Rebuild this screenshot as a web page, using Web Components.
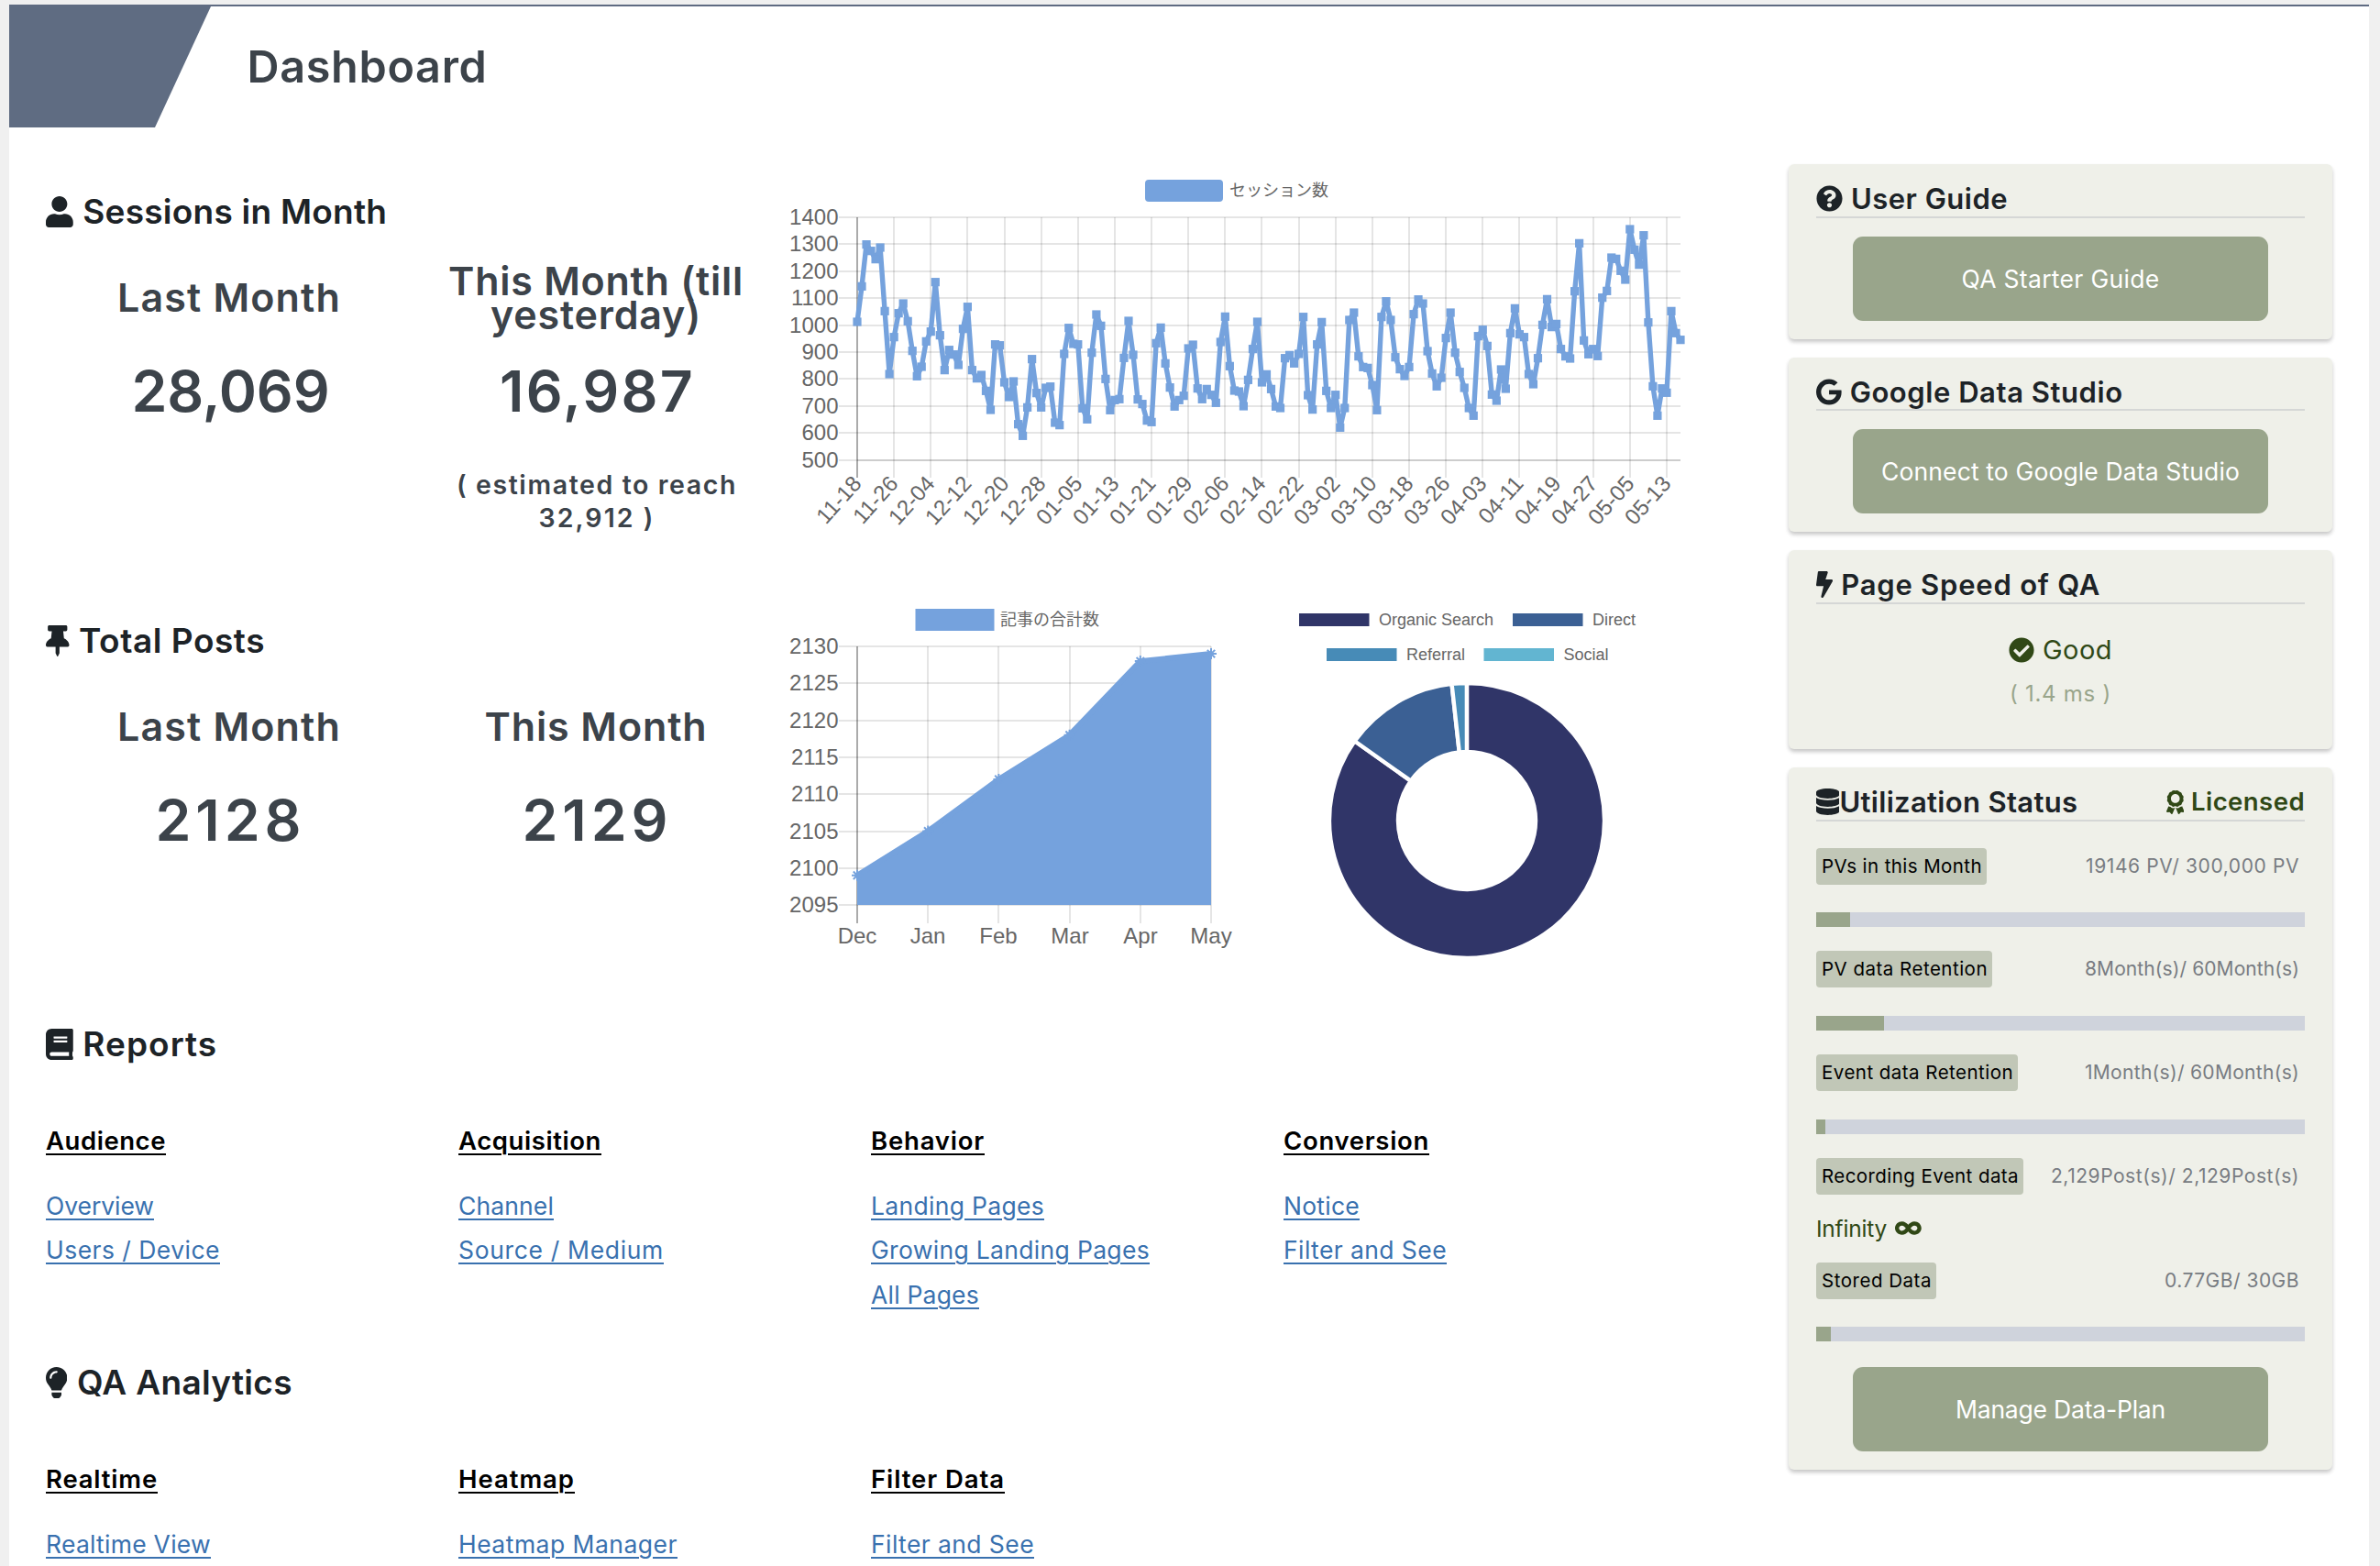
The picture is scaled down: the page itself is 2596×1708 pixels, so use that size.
<!DOCTYPE html>
<html lang="en">
<head>
<meta charset="utf-8">
<title>Dashboard</title>
<style>
    body {
        margin: 0;
        height: 1708px;
        overflow: hidden;
        background: #f0f0f0;
        color: #1d2327;
        font-family: Inter, "Noto Sans CJK JP", sans-serif;
        font-optical-sizing: none;
    }
</style>
</head>
<body>
<qa-dashboard>
    <qa-header slot="header"><fit-text w="262">Dashboard</fit-text></qa-header>

    <qa-section style="height: 460px">
        <qa-heading icon="user" w="332">Sessions in Month</qa-heading>
        <qa-stats>
            <qa-stat>
                <fit-text slot="label" w="244">Last Month</fit-text>
                <fit-text slot="value" w="216">28,069</fit-text>
            </qa-stat>
            <qa-stat>
                <fit-text slot="label" w="322">This Month (till</fit-text>
                <fit-text slot="label" w="230">yesterday)</fit-text>
                <fit-text slot="value" w="213">16,987</fit-text>
                <fit-text slot="note" w="306">( estimated to reach</fit-text>
                <fit-text slot="note" w="127">32,912 )</fit-text>
            </qa-stat>
        </qa-stats>
        <sessions-chart slot="chart"></sessions-chart>
    </qa-section>

    <qa-section style="height: 448px; --top: 35px">
        <qa-heading icon="pin" w="203">Total Posts</qa-heading>
        <qa-stats>
            <qa-stat>
                <fit-text slot="label" w="244">Last Month</fit-text>
                <fit-text slot="value" w="164">2128</fit-text>
            </qa-stat>
            <qa-stat>
                <fit-text slot="label" w="243">This Month</fit-text>
                <fit-text slot="value" w="164">2129</fit-text>
            </qa-stat>
        </qa-stats>
        <posts-chart slot="chart"></posts-chart>
        <source-chart slot="chart"></source-chart>
    </qa-section>

    <qa-section style="height: 369px">
        <qa-heading icon="book" w="147">Reports</qa-heading>
        <qa-links>
            <qa-menu><fit-text slot="title" w="131">Audience</fit-text>
                <fit-text w="118">Overview</fit-text><fit-text w="190">Users / Device</fit-text></qa-menu>
            <qa-menu><fit-text slot="title" w="156">Acquisition</fit-text>
                <fit-text w="104">Channel</fit-text><fit-text w="224">Source / Medium</fit-text></qa-menu>
            <qa-menu><fit-text slot="title" w="124">Behavior</fit-text>
                <fit-text w="189">Landing Pages</fit-text><fit-text w="304">Growing Landing Pages</fit-text><fit-text w="118">All Pages</fit-text></qa-menu>
            <qa-menu><fit-text slot="title" w="159">Conversion</fit-text>
                <fit-text w="83">Notice</fit-text><fit-text w="178">Filter and See</fit-text></qa-menu>
        </qa-links>
    </qa-section>

    <qa-section>
        <qa-heading icon="bulb" w="235">QA Analytics</qa-heading>
        <qa-links>
            <qa-menu><fit-text slot="title" w="122">Realtime</fit-text>
                <fit-text w="180">Realtime View</fit-text></qa-menu>
            <qa-menu><fit-text slot="title" w="127">Heatmap</fit-text>
                <fit-text w="239">Heatmap Manager</fit-text></qa-menu>
            <qa-menu><fit-text slot="title" w="146">Filter Data</fit-text>
                <fit-text w="178">Filter and See</fit-text></qa-menu>
        </qa-links>
    </qa-section>

    <qa-card slot="side" icon="question" w="171">
        <span slot="title">User Guide</span>
        <qa-button><fit-text w="216">QA Starter Guide</fit-text></qa-button>
    </qa-card>
    <qa-card slot="side" icon="google" w="298">
        <span slot="title">Google Data Studio</span>
        <qa-button><fit-text w="391">Connect to Google Data Studio</fit-text></qa-button>
    </qa-card>
    <qa-card slot="side" icon="bolt" w="283" style="height: 217px">
        <span slot="title">Page Speed of QA</span>
        <qa-speed>
            <fit-text slot="rate" w="76">Good</fit-text>
            <fit-text slot="time" w="111">( 1.4 ms )</fit-text>
        </qa-speed>
    </qa-card>
    <qa-card slot="side" icon="database" w="260" style="--icon-gap: 0px">
        <span slot="title">Utilization Status</span>
        <qa-icon slot="extra" name="award"></qa-icon>
        <fit-text slot="extra" w="124">Licensed</fit-text>
        <qa-usage style="--fill: 37px; margin-top: 29px"><fit-text slot="name" w="175">PVs in this Month</fit-text><fit-text w="233">19146 PV/ 300,000 PV</fit-text></qa-usage>
        <qa-usage style="--fill: 74px"><fit-text slot="name" w="181">PV data Retention</fit-text><fit-text w="234">8Month(s)/ 60Month(s)</fit-text></qa-usage>
        <qa-usage style="--fill: 10px"><fit-text slot="name" w="209">Event data Retention</fit-text><fit-text w="234">1Month(s)/ 60Month(s)</fit-text></qa-usage>
        <qa-usage unlimited><fit-text slot="name" w="215">Recording Event data</fit-text><fit-text w="271">2,129Post(s)/ 2,129Post(s)</fit-text></qa-usage>
        <qa-usage style="--fill: 16px"><fit-text slot="name" w="120">Stored Data</fit-text><fit-text w="147">0.77GB/ 30GB</fit-text></qa-usage>
        <qa-button style="margin-top: 27.5px"><fit-text w="229">Manage Data-Plan</fit-text></qa-button>
    </qa-card>
</qa-dashboard>

<script>
// Registers an element whose shadow root is built from a style sheet and markup.
function define(name, css, html) {
    customElements.define(name, class extends HTMLElement {
        constructor() {
            super();
            this.attachShadow({ mode: 'open' });
        }

        connectedCallback() {
            const markup = typeof html === 'function' ? html(this) : html;
            this.shadowRoot.innerHTML = `<style>${css}</style>${markup}`;
        }
    });
}

// name: [view box width, path]
const ICONS = {
    user: [448, 'M224 256c70.7 0 128-57.3 128-128S294.7 0 224 0 96 57.3 96 128s57.3 128 128 128zm89.6 32h-16.7c-22.2 10.2-46.9 16-72.9 16s-50.6-5.8-72.9-16h-16.7C60.2 288 0 348.2 0 422.4V464c0 26.5 21.5 48 48 48h352c26.5 0 48-21.5 48-48v-41.6c0-74.2-60.2-134.4-134.4-134.4z'],
    pin: [384, 'M298.028 214.267L285.793 96H328c13.255 0 24-10.745 24-24V24c0-13.255-10.745-24-24-24H56C42.745 0 32 10.745 32 24v48c0 13.255 10.745 24 24 24h42.207L85.972 214.267C37.465 236.82 0 277.261 0 328c0 13.255 10.745 24 24 24h136v104.007c0 1.242.289 2.467.845 3.578l24 48c2.941 5.882 11.364 5.893 14.311 0l24-48a8.008 8.008 0 0 0 .845-3.578V352h136c13.255 0 24-10.745 24-24-.001-51.183-37.983-91.42-85.973-113.733z'],
    book: [448, 'M448 360V24c0-13.3-10.7-24-24-24H96C43 0 0 43 0 96v320c0 53 43 96 96 96h328c13.3 0 24-10.7 24-24v-16c0-7.5-3.5-14.3-8.9-18.7-4.2-15.4-4.2-59.3 0-74.7 5.4-4.3 8.9-11.1 8.9-18.6zM128 134c0-3.3 2.7-6 6-6h212c3.3 0 6 2.7 6 6v20c0 3.3-2.7 6-6 6H134c-3.3 0-6-2.7-6-6v-20zm0 64c0-3.3 2.7-6 6-6h212c3.3 0 6 2.7 6 6v20c0 3.3-2.7 6-6 6H134c-3.3 0-6-2.7-6-6v-20zm253.4 250H96c-17.7 0-32-14.3-32-32 0-17.6 14.4-32 32-32h285.4c-1.9 17.1-1.9 46.9 0 64z'],
    bulb: [352, 'M96.06 454.35c.01 6.29 1.87 12.45 5.36 17.69l17.09 25.69a31.99 31.99 0 0 0 26.64 14.28h61.71a31.99 31.99 0 0 0 26.64-14.28l17.09-25.69a31.989 31.989 0 0 0 5.36-17.69l.04-38.35H96.01l.05 38.35zM0 176c0 44.37 16.45 84.85 43.56 115.78 16.52 18.85 42.36 58.23 52.21 91.45.04.26.07.52.11.78h160.24c.04-.26.07-.51.11-.78 9.85-33.22 35.69-72.6 52.21-91.45C335.55 260.85 352 220.37 352 176 352 78.61 272.91-.3 175.45 0 73.44.31 0 82.97 0 176zm176-80c-44.11 0-80 35.89-80 80 0 8.84-7.16 16-16 16s-16-7.16-16-16c0-61.76 50.24-112 112-112 8.84 0 16 7.16 16 16s-7.16 16-16 16z'],
    question: [512, 'M504 256c0 136.997-111.043 248-248 248S8 392.997 8 256C8 119.083 119.043 8 256 8s248 111.083 248 248zM262.655 90c-54.497 0-89.255 22.957-116.549 63.758-3.536 5.286-2.353 12.415 2.715 16.258l34.699 26.31c5.205 3.947 12.621 3.008 16.665-2.122 17.864-22.658 30.113-35.797 57.303-35.797 20.429 0 45.698 13.148 45.698 32.958 0 14.976-12.363 22.667-32.534 33.976C247.128 238.528 216 254.941 216 296v4c0 6.627 5.373 12 12 12h56c6.627 0 12-5.373 12-12v-1.333c0-28.462 83.186-29.647 83.186-106.667 0-58.002-60.165-102-116.531-102zM256 338c-25.365 0-46 20.635-46 46 0 25.364 20.635 46 46 46s46-20.636 46-46c0-25.365-20.635-46-46-46z'],
    google: [488, 'M488 261.8C488 403.3 391.1 504 248 504 110.8 504 0 393.2 0 256S110.8 8 248 8c66.8 0 123 24.5 166.3 64.9l-67.5 64.9C258.5 52.6 94.3 116.6 94.3 256c0 86.5 69.1 156.6 153.7 156.6 98.2 0 135-70.4 140.8-106.9H248v-85.3h236.1c2.3 12.7 3.9 24.9 3.9 41.4z'],
    bolt: [320, 'M296 160H180.6l42.6-129.8C227.2 15 215.7 0 200 0H56C44 0 33.8 8.9 32.2 20.8l-32 240C-1.7 275.2 9.5 288 24 288h118.7L96.6 482.5c-3.6 15.2 8 29.5 23.3 29.5 8.4 0 16.4-4.4 20.8-12l176-304c9.3-15.9-2.2-36-20.7-36z'],
    database: [448, 'M448 73.143v45.714C448 159.143 347.667 192 224 192S0 159.143 0 118.857V73.143C0 32.857 100.333 0 224 0s224 32.857 224 73.143zM448 176v102.857C448 319.143 347.667 352 224 352S0 319.143 0 278.857V176c48.125 33.143 136.208 48.572 224 48.572S399.874 209.143 448 176zm0 160v102.857C448 479.143 347.667 512 224 512S0 479.143 0 438.857V336c48.125 33.143 136.208 48.572 224 48.572S399.874 369.143 448 336z'],
    check: [512, 'M504 256c0 136.967-111.033 248-248 248S8 392.967 8 256 119.033 8 256 8s248 111.033 248 248zM227.314 387.314l184-184c6.248-6.248 6.248-16.379 0-22.627l-22.627-22.627c-6.248-6.249-16.379-6.249-22.628 0L216 308.118l-70.059-70.059c-6.248-6.248-16.379-6.248-22.628 0l-22.627 22.627c-6.248 6.248-6.248 16.379 0 22.627l104 104c6.249 6.249 16.379 6.249 22.628.001z'],
    award: [384, 'M97.12 362.63c-8.69-8.69-4.16-6.24-25.12-11.85-9.51-2.55-17.87-7.45-25.43-13.32L1.2 448.7c-4.39 10.77 3.81 22.47 15.43 22.03l52.69-2.01L105.56 507c8 8.44 22.04 5.81 26.43-4.96l52.05-127.62c-10.84 6.04-22.87 9.58-35.31 9.58-19.5 0-37.82-7.59-51.61-21.37zM382.8 448.7l-45.37-111.24c-7.56 5.88-15.92 10.77-25.43 13.32-21.07 5.64-16.45 3.18-25.12 11.85-13.79 13.78-32.12 21.37-51.62 21.37-12.44 0-24.47-3.55-35.31-9.58L252 502.04c4.39 10.77 18.44 13.4 26.43 4.96l36.25-38.28 52.69 2.01c11.62.44 19.82-11.27 15.43-22.03zM263 340c15.28-15.55 17.03-14.21 38.79-20.14 13.89-3.79 24.75-14.84 28.47-28.98 7.48-28.4 5.54-24.97 25.95-45.75 10.17-10.35 14.14-25.44 10.42-39.58-7.47-28.38-7.48-24.42 0-52.83 3.72-14.14-.25-29.23-10.42-39.58-20.41-20.78-18.47-17.36-25.95-45.75-3.72-14.14-14.58-25.19-28.47-28.98-27.88-7.61-24.52-5.62-44.95-26.41-10.17-10.35-25-14.4-38.89-10.61-27.87 7.6-23.98 7.61-51.9 0-13.89-3.79-28.72.25-38.89 10.61-20.41 20.78-17.05 18.8-44.94 26.41-13.89 3.79-24.75 14.84-28.47 28.98-7.47 28.39-5.54 24.97-25.95 45.75-10.17 10.35-14.15 25.44-10.42 39.58 7.47 28.36 7.48 24.4 0 52.82-3.72 14.14.25 29.23 10.42 39.59 20.41 20.78 18.47 17.35 25.95 45.75 3.72 14.14 14.58 25.19 28.47 28.98C104.6 325.96 106.27 325 121 340c13.23 13.47 33.84 15.88 49.74 5.82a39.676 39.676 0 0 1 42.53 0c15.89 10.06 36.5 7.65 49.73-5.82zM97.66 175.96c0-53.03 42.24-96.02 94.34-96.02s94.34 42.99 94.34 96.02-42.24 96.02-94.34 96.02-94.34-42.99-94.34-96.02z'],
    infinity: [640, 'M471.1 96C405 96 353.3 137.3 320 174.6 286.7 137.3 235 96 168.9 96 75.8 96 0 167.8 0 256s75.8 160 168.9 160c66.1 0 117.8-41.3 151.1-78.6 33.3 37.3 85 78.6 151.1 78.6 93.1 0 168.9-71.8 168.9-160S564.2 96 471.1 96zM168.9 320c-40.2 0-72.9-28.7-72.9-64s32.7-64 72.9-64c38.2 0 73.4 36.1 94 64-20.4 27.6-55.9 64-94 64zm302.2 0c-38.2 0-73.4-36.1-94-64 20.4-27.6 55.9-64 94-64 40.2 0 72.9 28.7 72.9 64s-32.7 64-72.9 64z'],
};

define('qa-icon', `
    :host { display: inline-flex; flex: none; }
    svg { height: var(--icon-size, 34px); fill: currentColor; }
`, el => {
    const [width, path] = ICONS[el.getAttribute('name')];
    return `<svg viewBox="0 0 ${width} 512"><path d="${path}"/></svg>`;
});

define('qa-dashboard', `
    :host {
        display: block;
        margin: 5px 12px 0 10px;
        min-height: 1703px;
        border-top: 2px solid #5f6b82;
        background: #fff;
    }
    .body { display: grid; grid-template-columns: 1901px 593px; padding-left: 40px; }
    main { padding-top: 41px; }
    aside { display: flex; flex-direction: column; gap: 20px; padding-top: 40px; }
`, `
    <slot name="header"></slot>
    <div class="body">
        <main><slot></slot></main>
        <aside><slot name="side"></slot></aside>
    </div>
`);

define('qa-header', `
    :host { display: flex; gap: 39.5px; height: 132px; color: #3c434a; font-size: 48.5px; font-weight: 600; line-height: 132px; }
    i { width: 220px; background: #5f6c82; clip-path: polygon(0 0, 100% 0, 159px 100%, 0 100%); }
`, '<i></i><slot></slot>');

define('qa-section', `
    :host { display: grid; grid-template-columns: 800px 1fr; }
    .text { padding-top: var(--top, 27px); }
    .chart { display: flex; }
`, '<div class="text"><slot></slot></div><div class="chart"><slot name="chart"></slot></div>');

define('qa-heading', `
    :host { display: flex; align-items: center; gap: 10.5px; height: 48px; font-size: 37px; font-weight: 600; line-height: 48px; }
`, el => `<qa-icon name="${el.getAttribute('icon')}"></qa-icon><fit-text w="${el.getAttribute('w')}"><slot></slot></fit-text>`);

define('qa-stats', ':host { display: flex; margin-top: 33px; }', '<slot></slot>');

define('qa-stat', `
    :host { display: block; width: 401px; color: #3c434a; font-weight: 600; text-align: center; }
    div { display: flex; flex-direction: column; align-items: center; justify-content: center; }
    .label { height: 73px; font-size: 43px; line-height: 36.5px; }
    .value { margin: 30px 0 50px; padding-left: 3px; font-size: 62.5px; line-height: 70px; }
    .note { padding-left: 2px; font-size: 28.5px; line-height: 36px; }
`, `
    <div class="label"><slot name="label"></slot></div>
    <div class="value"><slot name="value"></slot></div>
    <div class="note"><slot name="note"></slot></div>
`);

define('qa-links', ':host { display: flex; margin-top: 61px; }', '<slot></slot>');

define('qa-menu', `
    :host { display: block; flex: none; width: 450px; text-underline-offset: 4px; }
    div { display: flex; flex-direction: column; align-items: flex-start; text-decoration: underline 2px; }
    .title { margin-bottom: 26.5px; color: #000; font-size: 27.5px; font-weight: 600; line-height: 40px; }
    .list { color: #3971af; font-size: 26.5px; line-height: 48.6px; }
    ::slotted(*) { text-decoration: inherit; }
`, '<div class="title"><slot name="title"></slot></div><div class="list"><slot></slot></div>');

define('qa-card', `
    :host {
        display: block;
        box-sizing: border-box;
        padding: 0 30px 20px;
        border-radius: 6px;
        background: #eff0e9;
        box-shadow: 0 3px 4px rgba(0, 0, 0, 0.22);
    }
    h3 {
        display: flex;
        align-items: center;
        gap: var(--icon-gap, 9px);
        margin: 0;
        padding-top: 19px;
        padding-bottom: 0.5px;
        border-bottom: 2px solid #d5d7d6;
        font-size: 31px;
        font-weight: 600;
        line-height: 37px;
        --icon-size: 29px;
    }
    .extra { display: flex; align-items: center; gap: 8px; margin-left: auto; color: #304816; font-size: 27.5px; --icon-size: 26px; }
`, el => `
    <h3>
        <qa-icon name="${el.getAttribute('icon')}"></qa-icon>
        <fit-text w="${el.getAttribute('w')}"><slot name="title"></slot></fit-text>
        <span class="extra"><slot name="extra"></slot></span>
    </h3>
    <slot></slot>
`);

define('qa-button', `
    :host {
        display: flex;
        justify-content: center;
        width: 453px;
        margin: 20px auto 0;
        border-radius: 11px;
        background: #99a58b;
        color: #fff;
        font-size: 26.5px;
        line-height: 92px;
    }
`, '<slot></slot>');

define('qa-speed', `
    :host { display: block; padding-top: 30px; }
    div { display: flex; align-items: center; justify-content: center; gap: 9px; height: 40px; line-height: 40px; }
    .rate { color: #304816; font-size: 29px; --icon-size: 28px; }
    .time { margin-top: 8px; color: #99a58b; font-size: 24px; }
`, `
    <div class="rate"><qa-icon name="check"></qa-icon><slot name="rate"></slot></div>
    <div class="time"><slot name="time"></slot></div>
`);

define('qa-usage', `
    :host { display: block; margin-top: 26px; font-size: 21px; line-height: 40px; }
    :host([unlimited]) { margin-bottom: -26px; }
    .row { display: flex; justify-content: space-between; padding-right: 6px; color: #787c82; }
    .name { padding: 0 5px 0 6px; border-radius: 4px; background: #c1c7b7; color: #000; font-size: 20.5px; }
    .bar { height: 16px; margin-top: 30.7px; background: linear-gradient(#99a58b, #99a58b) 0 0 / var(--fill) 100% no-repeat #cfd3dc; }
    .infinity { display: flex; align-items: center; gap: 9px; height: 74px; color: #304816; font-size: 24.5px; --icon-size: 23px; }
`, el => `
    <div class="row"><span class="name"><slot name="name"></slot></span><slot></slot></div>
    ${el.hasAttribute('unlimited')
        ? '<div class="infinity"><fit-text w="77">Infinity</fit-text><qa-icon name="infinity"></qa-icon></div>'
        : '<div class="bar"></div>'}
`);

const CHART_CSS = `
    :host { display: block; flex: none; }
    svg { display: block; overflow: visible; }
    text { fill: #666; font: 24px "Liberation Sans", "Noto Sans CJK JP", sans-serif; }
    text.legend { font-size: 18px; }
    .grid { stroke: rgba(0, 0, 0, 0.1); stroke-width: 2; }
    .axis { stroke: rgba(0, 0, 0, 0.25); stroke-width: 2; }
`;
const BLUE = '#75a2dd';
const hline = (x1, x2, y, cls = 'grid') => `<line class="${cls}" x1="${x1}" x2="${x2}" y1="${y}" y2="${y}"/>`;
const vline = (x, y1, y2, cls = 'grid') => `<line class="${cls}" x1="${x}" x2="${x}" y1="${y1}" y2="${y2}"/>`;

// Daily sessions, as depth below the top of the canvas in thirds of a pixel.
const SESSIONS = [
    513, 397, 260, 281, 308, 270, 478, 684, 563, 485, 453, 511, 608, 691, 660, 577, 545, 383, 557, 671,
    605, 620, 654, 536, 464, 671, 698, 687, 739, 801, 587, 590, 711, 759, 708, 848, 886, 793, 635, 746,
    793, 729, 725, 843, 851, 618, 533, 585, 587, 796, 832, 614, 489, 526, 700, 802, 769, 766, 631, 510,
    621, 767, 782, 836, 841, 583, 532, 649, 728, 790, 769, 755, 600, 588, 731, 766, 733, 752, 778, 579,
    496, 658, 738, 741, 789, 703, 602, 513, 711, 685, 733, 790, 795, 632, 622, 649, 618, 497, 753, 800,
    587, 514, 739, 795, 752, 859, 795, 507, 483, 626, 661, 664, 720, 802, 497, 446, 507, 629, 668, 690,
    661, 488, 440, 453, 609, 682, 724, 696, 566, 483, 614, 677, 729, 795, 820, 560, 539, 592, 751, 771,
    669, 732, 550, 469, 554, 563, 684, 717, 632, 523, 439, 530, 520, 602, 626, 633, 413, 256, 574, 619,
    602, 625, 434, 412, 303, 307, 346, 375, 210, 277, 326, 230, 515, 724, 820, 731, 745, 478, 550, 572,
];
const DAYS = ['11-18', '11-26', '12-04', '12-12', '12-20', '12-28', '01-05', '01-13', '01-21', '01-29', '02-06', '02-14',
    '02-22', '03-02', '03-10', '03-18', '03-26', '04-03', '04-11', '04-19', '04-27', '05-05', '05-13'];

define('sessions-chart', CHART_CSS, () => {
    const step = 898 / 179;
    const points = SESSIONS.map((y, i) => [95 + i * step, y / 3]);
    let out = '';
    for (let i = 0; i < 10; i++) {
        const y = Math.round(56.7 + i * 29.45);
        out += hline(75, 993, y);
        out += `<text x="74.5" y="${y + 8}" text-anchor="end">${1400 - i * 100}</text>`;
    }
    DAYS.forEach((day, i) => {
        const x = Math.round(95 + i * 8 * step);
        out += vline(x, 57, 341);
        out += `<text transform="translate(${x} 343) rotate(-48)" y="8" text-anchor="end">${day}</text>`;
    });
    out += vline(95, 57, 341, 'axis') + hline(95, 993, 322);
    out += `<polyline points="${points.map(p => p.join()).join(' ')}" fill="none" stroke="${BLUE}" stroke-width="5.4" stroke-linejoin="round"/>`;
    out += points.map(([x, y]) => `<rect x="${x - 4.6}" y="${y - 4.6}" width="9.2" height="9.2" fill="${BLUE}"/>`).join('');
    return `<svg width="1010" height="460" viewBox="10 0 1010 460">
        <rect x="409" y="16" width="85" height="24" rx="4" fill="${BLUE}"/>
        <text class="legend" x="501" y="34">セッション数</text>${out}</svg>`;
});

define('posts-chart', CHART_CSS, () => {
    const values = [2099, 2105, 2112, 2118, 2128, 2129];
    const points = values.map((v, i) => [95 + i * 77.2, 347 - (v - 2095) * 8.057]);
    const path = points.map(p => p.join()).join(' ');
    let out = '';
    for (let i = 0; i < 8; i++) {
        const y = Math.round(65 + i * 40.3);
        out += hline(75, 481, y);
        out += `<text x="74.5" y="${y + 8}" text-anchor="end">${2130 - i * 5}</text>`;
    }
    ['Dec', 'Jan', 'Feb', 'Mar', 'Apr', 'May'].forEach((month, i) => {
        const x = Math.round(95 + i * 77.2);
        out += vline(x, 65, 367);
        out += `<text x="${x}" y="388.5" text-anchor="middle">${month}</text>`;
    });
    out += vline(95, 65, 367, 'axis');
    out += `<g clip-path="url(#area)"><polygon points="${path} 481,347 95,347" fill="${BLUE}"/>
        <polyline points="${path}" fill="none" stroke="${BLUE}" stroke-width="6"/></g>`;
    for (const [x, y] of points) {
        out += `<path transform="translate(${x} ${y})" d="M-6 0H6M0-6V6M-4.2-4.2L4.2 4.2M-4.2 4.2L4.2-4.2" stroke="${BLUE}" stroke-width="2"/>`;
    }
    return `<svg width="530" height="420" viewBox="10 0 530 420">
        <clipPath id="area"><rect x="95" y="65" width="386" height="282"/></clipPath>
        <rect x="158.5" y="24" width="86" height="24" fill="${BLUE}"/>
        <text class="legend" x="251" y="42">記事の合計数</text>${out}</svg>`;
});

define('source-chart', CHART_CSS, () => {
    const at = (deg, r) => {
        const a = deg * Math.PI / 180;
        return `${220 + r * Math.sin(a)} ${255 - r * Math.cos(a)}`;
    };
    const slice = (from, to, color) => {
        const large = to - from > 180 ? 1 : 0;
        return `<path d="M${at(from, 150)}A150 150 0 ${large} 1 ${at(to, 150)}L${at(to, 75)}A75 75 0 ${large} 0 ${at(from, 75)}Z" fill="${color}" stroke="#fff" stroke-width="4.4"/>`;
    };
    const key = (x, y, color, label) => `<rect x="${x}" y="${y}" width="76.5" height="14" fill="${color}"/>
        <text class="legend" x="${x + 87}" y="${y + 13}">${label}</text>`;
    return `<svg width="440" height="420" viewBox="0 0 440 420">
        ${key(37, 29, '#303568', 'Organic Search')}${key(270, 29, '#3b6094', 'Direct')}
        ${key(67, 67, '#478bb7', 'Referral')}${key(238.5, 67, '#62b5d1', 'Social')}
        ${slice(0, 305.3, '#303568')}${slice(305.3, 353.7, '#3b6094')}${slice(353.7, 359.95, '#478bb7')}
    </svg>`;
});

// Text that is tracked in or out to take the width given in its w attribute.
// Defined last, so that its font is already inherited when it is measured.
customElements.define('fit-text', class extends HTMLElement {
    constructor() {
        super();
        this.attachShadow({ mode: 'open' });
    }

    connectedCallback() {
        this.shadowRoot.innerHTML = `
            <style>
                :host { display: block; width: max-content; white-space: nowrap; }
            </style>
            <slot></slot>
        `;
        const slot = this.shadowRoot.querySelector('slot');
        const text = slot.assignedNodes({ flatten: true }).map(node => node.textContent).join('').trim();
        const spare = this.getAttribute('w') - this.getBoundingClientRect().width;
        this.style.letterSpacing = `${spare / text.length}px`;
    }
});
</script>
</body>
</html>
